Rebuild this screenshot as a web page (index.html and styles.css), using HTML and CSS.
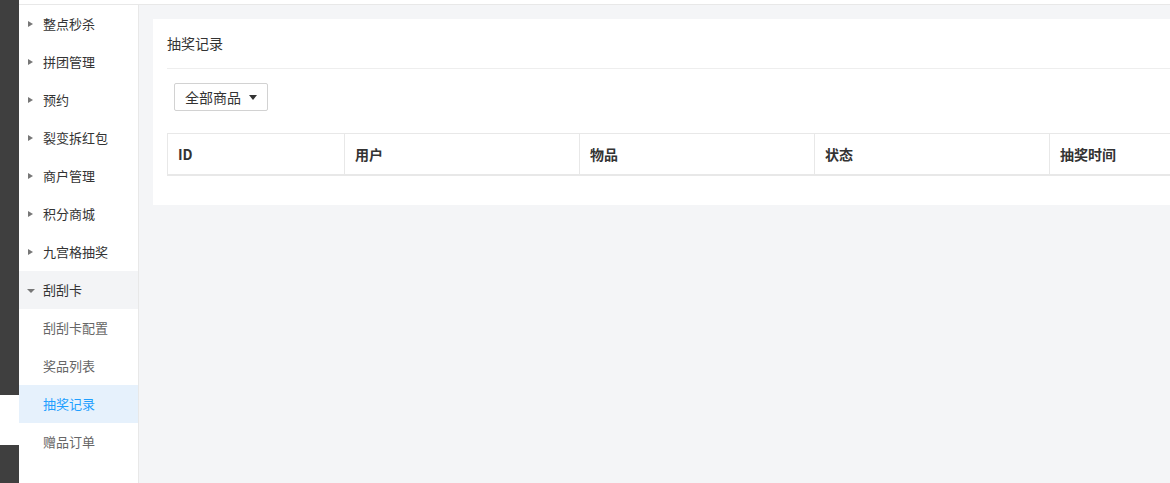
FILE: index.html
```html
<!DOCTYPE html>
<html lang="zh-CN">
<head>
<meta charset="utf-8">
<title>抽奖记录</title>
<link rel="stylesheet" href="styles.css">
</head>
<body>
<div class="page">
  <div class="rail">
    <div class="rail-dark rail-top"></div>
    <div class="rail-gap"></div>
    <div class="rail-dark rail-bottom"></div>
  </div>
  <div class="frame">
    <div class="topbar"></div>
    <div class="body">
      <nav class="sidebar">
        <div class="item"><span class="arrow"></span>整点秒杀</div>
        <div class="item"><span class="arrow"></span>拼团管理</div>
        <div class="item"><span class="arrow"></span>预约</div>
        <div class="item"><span class="arrow"></span>裂变拆红包</div>
        <div class="item"><span class="arrow"></span>商户管理</div>
        <div class="item"><span class="arrow"></span>积分商城</div>
        <div class="item"><span class="arrow"></span>九宫格抽奖</div>
        <div class="item open"><span class="arrow down"></span>刮刮卡</div>
        <div class="item sub">刮刮卡配置</div>
        <div class="item sub">奖品列表</div>
        <div class="item sub active">抽奖记录</div>
        <div class="item sub">赠品订单</div>
      </nav>
      <main class="main">
        <section class="card">
          <div class="card-title">抽奖记录</div>
          <div class="toolbar">
            <button class="select">全部商品<span class="caret"></span></button>
          </div>
          <table class="table">
            <thead>
              <tr>
                <th class="c-id">ID</th>
                <th class="c-col">用户</th>
                <th class="c-col">物品</th>
                <th class="c-col">状态</th>
                <th class="c-col">抽奖时间</th>
              </tr>
            </thead>
          </table>
        </section>
      </main>
    </div>
  </div>
</div>
</body>
</html>
```

FILE: styles.css
```css
html, body {
  margin: 0;
  padding: 0;
}
body {
  width: 1170px;
  height: 483px;
  overflow: hidden;
  background: #fff;
  font-family: "Noto Sans CJK SC", "Noto Sans", "Liberation Sans", sans-serif;
  color: #333;
}
.page {
  display: flex;
  height: 483px;
}
.rail {
  width: 19px;
  flex: none;
  display: flex;
  flex-direction: column;
}
.rail-dark {
  background: #3f3f3f;
}
.rail-top {
  height: 395px;
}
.rail-gap {
  height: 50px;
  background: #fff;
}
.rail-bottom {
  flex: 1;
}
.frame {
  flex: 1;
  display: flex;
  flex-direction: column;
  min-width: 0;
}
.topbar {
  height: 4px;
  background: #fff;
  border-bottom: 1px solid #e8e8e8;
  flex: none;
}
.body {
  flex: 1;
  display: flex;
  min-height: 0;
}
.sidebar {
  width: 120px;
  flex: none;
  box-sizing: border-box;
  border-right: 1px solid #e8e8e8;
  background: #fff;
}
.item {
  height: 38px;
  line-height: 38px;
  font-size: 13px;
  color: #333;
  padding-left: 24px;
  position: relative;
  white-space: nowrap;
}
.item.open {
  background: #f3f4f6;
}
.item.sub {
  color: #666;
}
.item.active {
  background: #e6f1fc;
  color: #1e9fff;
}
.arrow {
  position: absolute;
  left: 9px;
  top: 16px;
  width: 0;
  height: 0;
  border-top: 3.5px solid transparent;
  border-bottom: 3.5px solid transparent;
  border-left: 5px solid #777;
}
.arrow.down {
  left: 8px;
  top: 18px;
  border-left: 4px solid transparent;
  border-right: 4px solid transparent;
  border-top: 4px solid #777;
  border-bottom: 0;
}
.main {
  flex: 1;
  background: #f4f5f7;
  padding: 14px 0 0 14px;
  min-width: 0;
  overflow: hidden;
}
.card {
  width: 1160px;
  background: #fff;
  padding: 0 14px 29px;
  box-sizing: border-box;
}
.card-title {
  height: 49px;
  line-height: 49px;
  font-size: 14px;
  color: #333;
  border-bottom: 1px solid #eee;
}
.toolbar {
  padding: 14px 0 0 7px;
}
.select {
  height: 28px;
  width: 94px;
  box-sizing: border-box;
  border: 1px solid #d2d2d2;
  border-radius: 2px;
  background: #fff;
  font-family: inherit;
  font-size: 14px;
  color: #333;
  padding: 0 0 0 10px;
  display: flex;
  align-items: center;
  cursor: pointer;
}
.caret {
  width: 0;
  height: 0;
  margin-left: 8px;
  border-left: 4px solid transparent;
  border-right: 4px solid transparent;
  border-top: 5px solid #333;
}
.table {
  margin-top: 22px;
  border-collapse: collapse;
  table-layout: fixed;
  width: 1117px;
}
.table th {
  height: 40px;
  padding: 0 10px;
  text-align: left;
  font-size: 14px;
  font-weight: bold;
  color: #333;
  border: 1px solid #e8e8e8;
  border-bottom: 2px solid #e8e8e8;
}
.c-id {
  width: 156px;
}
.c-col {
  width: 214px;
}
```
